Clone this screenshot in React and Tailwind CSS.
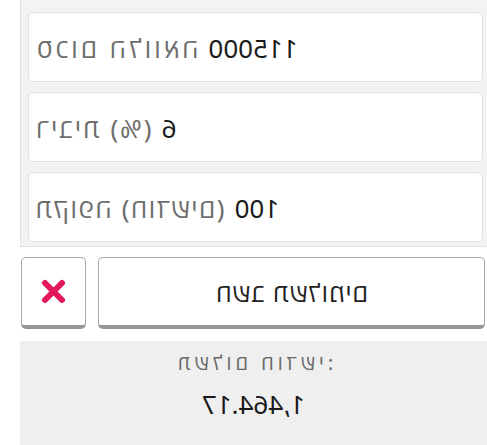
import React from "react";

// the reference is a mirrored shot of an RTL mortgage calculator,
// so the page is laid out normally and flipped as a whole
const fields = [
  { label: "סכום הלוואה", value: "115000", track: "tracking-[3px]" },
  { label: "ריבית (%)", value: "6", track: "tracking-[2px]" },
  { label: "תקופה (חודשים)", value: "100", track: "tracking-[1.5px]" },
];

function Field({ label, value, track }) {
  return (
    <div className="h-[70px] flex items-center gap-[10px] bg-white border border-[#e0e0e0] rounded-[5px] pr-[5px] pt-[3px]">
      <span className={`text-[26px] text-[#6e6e6e] ${track}`}>{label}</span>
      <span className="text-[26px] text-[#1a1a1a]">{value}</span>
    </div>
  );
}

export default function App() {
  return (
    <div
      className="w-[487px] h-[445px] overflow-hidden bg-white -scale-x-100"
      style={{ fontFamily: '"Noto Sans", "Open Sans", sans-serif' }}
    >
      {/* inputs panel */}
      <div
        dir="rtl"
        className="w-[467px] bg-[#f3f3f3] border-r border-b border-[#e2e2e2] pt-[12px] pb-[4px] pl-[4px] pr-[7px] flex flex-col gap-[10px]"
      >
        {fields.map((f) => (
          <Field key={f.label} {...f} />
        ))}
      </div>

      {/* buttons */}
      <div dir="rtl" className="w-[467px] mt-[10px] flex gap-[12px] pr-[1px]">
        <button className="w-[65px] h-[72px] flex items-center justify-center bg-white border-[1.5px] border-[#a8a8a8] border-b-[4px] border-b-[#959595] rounded-[5px]">
          <svg width="25" height="25" viewBox="0 0 25 25">
            <path
              d="M4 4 L21 21 M21 4 L4 21"
              stroke="#e3175c"
              strokeWidth="6"
              strokeLinecap="round"
            />
          </svg>
        </button>
        <button className="w-[387px] h-[72px] flex items-center justify-center bg-white border-[1.5px] border-[#a8a8a8] border-b-[4px] border-b-[#959595] rounded-[5px] text-[25px] tracking-[1px] text-[#222] pt-[3px]">
          חשב תשלומים
        </button>
      </div>

      {/* result */}
      <div
        dir="rtl"
        className="w-[467px] mt-[12px] h-[120px] bg-[#efefef] flex flex-col items-center pt-[8px]"
      >
        <div className="text-[20px] leading-[28px] tracking-[4px] text-[#686868]">תשלום חודשי:</div>
        <div className="text-[26px] leading-[34px] text-[#1a1a1a] mt-[10px]">1,464.17</div>
      </div>
    </div>
  );
}
